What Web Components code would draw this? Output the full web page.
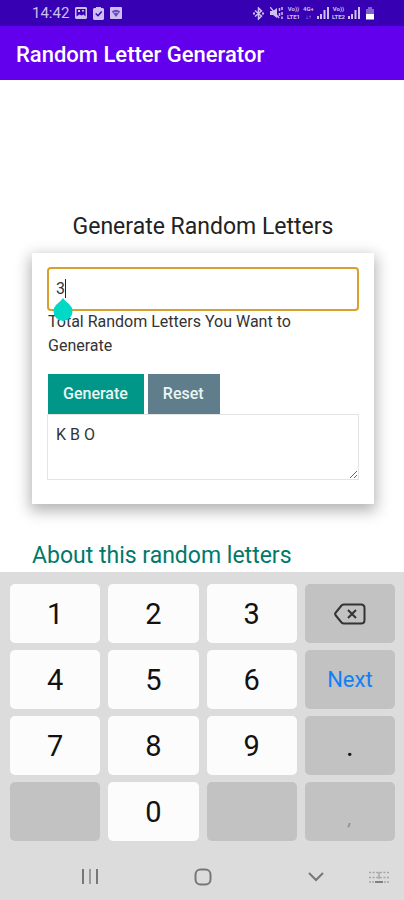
<!DOCTYPE html>
<html lang="en">
<head>
<meta charset="utf-8">
<meta name="viewport" content="width=device-width, initial-scale=1">
<title>Random Letter Generator</title>
<style>
  body { margin: 0; font-family: Roboto, "Liberation Sans", sans-serif; background: #fff; color: #222; }
</style>
</head>
<body>
<phone-screen></phone-screen>
<script>
const define = (name, html, setup) => {
  const template = document.createElement('template');
  template.innerHTML = html;
  customElements.define(name, class extends HTMLElement {
    constructor() {
      super();
      this.attachShadow({ mode: 'open' }).append(template.content.cloneNode(true));
    }
    connectedCallback() { if (setup) setup(this, this.shadowRoot); }
  });
};

define('volte-badge', `
  <style>
    :host { display: flex; flex-direction: column; align-items: center; font-size: 6px; line-height: 8px; font-weight: 700; white-space: nowrap; }
  </style>
  <span><slot name="top"></slot></span><span><slot name="bottom"></slot></span>`);

define('signal-bars', `
  <style>:host { display: block; width: 12px; height: 12px; } svg { display: block; }</style>
  <svg width="12" height="12" viewBox="0 0 12 12" fill="currentColor" aria-hidden="true"><path d="M0 9h2v3H0zM3 7h2v5H3zM6.500 3h2v9h-2zM10 0h2v12h-2z"/></svg>`);

define('status-bar', `
  <style>
    :host { display: flex; align-items: center; justify-content: space-between; height: 26px; padding: 0 29px 0 32px; background: #3700b3; color: #cdc0ef; }
    div { display: flex; align-items: center; }
    .left { gap: 6px; }
    .right { gap: 3px; }
    time { font-size: 15px; line-height: 20px; }
    svg { display: block; }
    .battery { padding-left: 2px; }
    .bluetooth { padding-right: 2px; }
  </style>
  <div class="left">
    <time>14:42</time>
    <svg width="12" height="12" viewBox="0 0 12 12" aria-label="Picture"><path fill="currentColor" fill-rule="evenodd" d="M1 0h10l1 1v10l-1 1H1l-1-1V1zM1.500 2v7.500l3-2 2 1 2-1 2 2V2zM3 3h2v2H3zM7 3h2v1.500H7z"/></svg>
    <svg width="11" height="13" viewBox="0 0 11 13" aria-label="Task"><path fill="currentColor" d="M1 1h2V0h5v1h2l1 1v10l-1 1H1l-1-1V2z"/><path d="M2.700 6.500 5 8.700 8.700 4.500" fill="none" stroke="#3700b3" stroke-width="1.500"/></svg>
    <svg width="12" height="12" viewBox="0 0 12 12" aria-label="Wi-Fi"><rect width="12" height="12" rx="1" fill="currentColor"/><path fill="#3700b3" opacity=".65" d="M1.800 4.500q4.200-3.500 8.400 0L6 10z"/><path d="M3.500 6q2.500-1.500 5 0" fill="none" stroke="#cdc0ef" stroke-width=".8"/></svg>
  </div>
  <div class="right">
    <svg class="bluetooth" width="13" height="13" viewBox="0 0 13 13" fill="none" stroke="currentColor" stroke-width="1.500" aria-label="Bluetooth"><path d="M3 3.500 9.500 9 6.500 12V1l3 3L3 9.500"/><path d="M1 6.500h2M10 6.500h2" stroke-width="2"/></svg>
    <svg width="14" height="12" viewBox="0 0 14 12" aria-label="Vibrate"><path fill="currentColor" d="M0 4h3l4-3v10L3 8H0z"/><path d="M0 0l9 11" stroke="currentColor" stroke-width="1.400"/><path d="M9.500 1v3M9.500 6v3M12 0v3M12 5v3M12 9.500V12" stroke="currentColor" stroke-width="1.500"/></svg>
    <volte-badge><span slot="top">Vo))</span><span slot="bottom">LTE1</span></volte-badge>
    <volte-badge><span slot="top">4G+</span><span slot="bottom">↓↑</span></volte-badge>
    <signal-bars></signal-bars>
    <volte-badge><span slot="top">Vo))</span><span slot="bottom">LTE2</span></volte-badge>
    <signal-bars></signal-bars>
    <svg class="battery" width="10" height="13" viewBox="0 0 10 13" aria-label="Battery"><path fill="currentColor" opacity=".5" d="M3 0h4v2h2v6H1V2h2z"/><path fill="#fff" d="M1 7h8v5.500H1z"/></svg>
  </div>`);

define('app-bar', `
  <style>
    :host { display: flex; align-items: center; height: 54px; padding: 3px 16px 0; background: #6200ee; color: #fff; box-sizing: border-box; }
    h1 { margin: 0; font-size: 22px; line-height: 28px; font-weight: 500; }
  </style>
  <h1><slot></slot></h1>`);

define('action-button', `
  <style>
    :host { display: block; }
    button { display: block; height: 40px; padding: 0 16px 0 15px; border: 0; border-radius: 0; background: var(--fill); color: #e8f6f5; font: 500 16px/24px Roboto, "Liberation Sans", sans-serif; }
  </style>
  <button type="button"><slot></slot></button>`);

define('letter-form', `
  <style>
    :host { display: block; padding: 14px 15px 24px; background: #fff; box-shadow: 0 5px 14px 2px rgba(0,0,0,.3); }
    * { box-sizing: border-box; }
    .field { position: relative; }
    input, textarea { display: block; width: 100%; margin: 0; background: #fff; color: #333; font: 16px/24px Roboto, "Liberation Sans", sans-serif; outline: 0; }
    input { height: 44px; padding: 0 7px 2px; border: 2px solid #d9a02e; border-radius: 4px; }
    .caret { position: absolute; left: 18px; top: 12px; width: 1px; height: 19px; background: #222; }
    .grip { position: absolute; left: 6px; top: 31px; }
    label { display: block; padding: 0 1px; font-size: 16px; line-height: 24px; color: #333; }
    .hint { max-width: 280px; margin-top: -1px; }
    .actions { display: flex; gap: 4px; padding: 16px 1px 0; }
    textarea { height: 66px; padding: 8px; border: 1px solid #e4e4e4; resize: vertical; }
  </style>
  <div class="field">
    <input id="count" type="text" inputmode="numeric" value="3">
    <span class="caret"></span>
    <svg class="grip" width="20" height="24" viewBox="0 0 20 24" aria-hidden="true"><path fill="#00d9c5" d="M10 0Q12 3 16.500 6.500A9.500 9.500 0 1 1 3.500 6.500Q8 3 10 0z"/></svg>
  </div>
  <label class="hint" for="count">Total Random Letters You Want to Generate</label>
  <div class="actions">
    <action-button style="--fill:#009688">Generate</action-button>
    <action-button style="--fill:#607d8b">Reset</action-button>
  </div>
  <textarea aria-label="Generated letters">K B O</textarea>`);

define('page-content', `
  <style>
    :host { display: block; height: 492px; padding: 131px 30px 0 32px; box-sizing: border-box; overflow: hidden; background: #fff; }
    h2, h3 { margin: 0; font-weight: 400; font-size: 23px; line-height: 32px; }
    h2 { text-align: center; margin-bottom: 10px; color: #222; }
    h3 { margin-top: 36px; color: #00796b; }
  </style>
  <h2>Generate Random Letters</h2>
  <letter-form></letter-form>
  <h3>About this random letters</h3>`);

define('pad-key', `
  <style>
    :host { display: grid; }
    button { display: flex; align-items: center; justify-content: center; min-width: 0; padding: 0; border: 0; border-radius: 5px; background: #fcfcfc; color: #111; font: 29px/36px Roboto, "Liberation Sans", sans-serif; }
    :host([kind]) button { background: #c2c2c2; }
    :host([kind="next"]) button { font-size: 22px; color: #1180f5; }
    :host([faint]) button { color: #8a8a8a; font-size: 18px; font-style: italic; padding-top: 14px; }
  </style>
  <button type="button"><slot></slot></button>`, (el, root) => {
    if (el.title) root.querySelector('button').setAttribute('aria-label', el.title);
  });

define('number-pad', `
  <style>
    :host { display: grid; grid-template-columns: repeat(4, 1fr); grid-auto-rows: 59px; gap: 7px 8px; padding: 12px 9px 0 10px; }
  </style>
  <pad-key>1</pad-key><pad-key>2</pad-key><pad-key>3</pad-key>
  <pad-key kind="side" title="Delete"><svg width="32" height="22" viewBox="0 0 32 22" fill="none" stroke="#333" stroke-width="2"><path d="M10 1.500h17q3.500 0 3.500 3.500v12q0 3.500-3.500 3.500H10q-1.500 0-2.500-1L1.800 12.500q-1.300-1.500 0-3L7.500 2.500q1-1 2.500-1z"/><path d="m14 7 8 8m0-8-8 8"/></svg></pad-key>
  <pad-key>4</pad-key><pad-key>5</pad-key><pad-key>6</pad-key><pad-key kind="next">Next</pad-key>
  <pad-key>7</pad-key><pad-key>8</pad-key><pad-key>9</pad-key><pad-key kind="side">.</pad-key>
  <pad-key kind="side" title="Blank"></pad-key><pad-key>0</pad-key><pad-key kind="side" title="Blank"></pad-key><pad-key kind="side" faint>,</pad-key>`);

define('nav-bar', `
  <style>
    :host { display: flex; align-items: center; gap: 41px; padding: 24px 15px 11px 78px; }
    div { display: flex; flex: 1; justify-content: space-between; }
    button { display: block; padding: 0; border: 0; background: none; color: #777; }
    svg { display: block; fill: none; stroke: currentColor; stroke-width: 2; }
  </style>
  <div>
    <button aria-label="Recent apps"><svg width="24" height="24" viewBox="0 0 24 24"><path d="M5 4v15M19 4v15"/><path d="M12 4v15" opacity=".65"/></svg></button>
    <button aria-label="Home"><svg width="24" height="24" viewBox="0 0 24 24"><rect x="4.500" y="4.500" width="15" height="15" rx="5"/></svg></button>
    <button aria-label="Hide keyboard"><svg width="24" height="24" viewBox="0 0 24 24"><path d="m5 8 7 7 7-7"/></svg></button>
  </div>
  <button aria-label="Keyboard"><svg width="20" height="24" viewBox="0 0 20 24" style="stroke-width:1.500;color:#a6a6a6"><path d="M0 7.500h20M0 12.500h20" stroke-dasharray="2 1.600"/><path d="M0 17h2M3 17h2M15 17h2M18 17h2M10 7v7"/><path d="M6 17h8" style="stroke:#808080;stroke-width:2"/></svg></button>`);

define('phone-screen', `
  <style>
    :host { display: flex; flex-direction: column; min-height: 100vh; }
    main { display: block; }
    footer { flex: 1; background: #dcdcdc; }
  </style>
  <status-bar></status-bar>
  <app-bar>Random Letter Generator</app-bar>
  <main><page-content></page-content></main>
  <footer><number-pad></number-pad><nav-bar></nav-bar></footer>`);
</script>
</body>
</html>
